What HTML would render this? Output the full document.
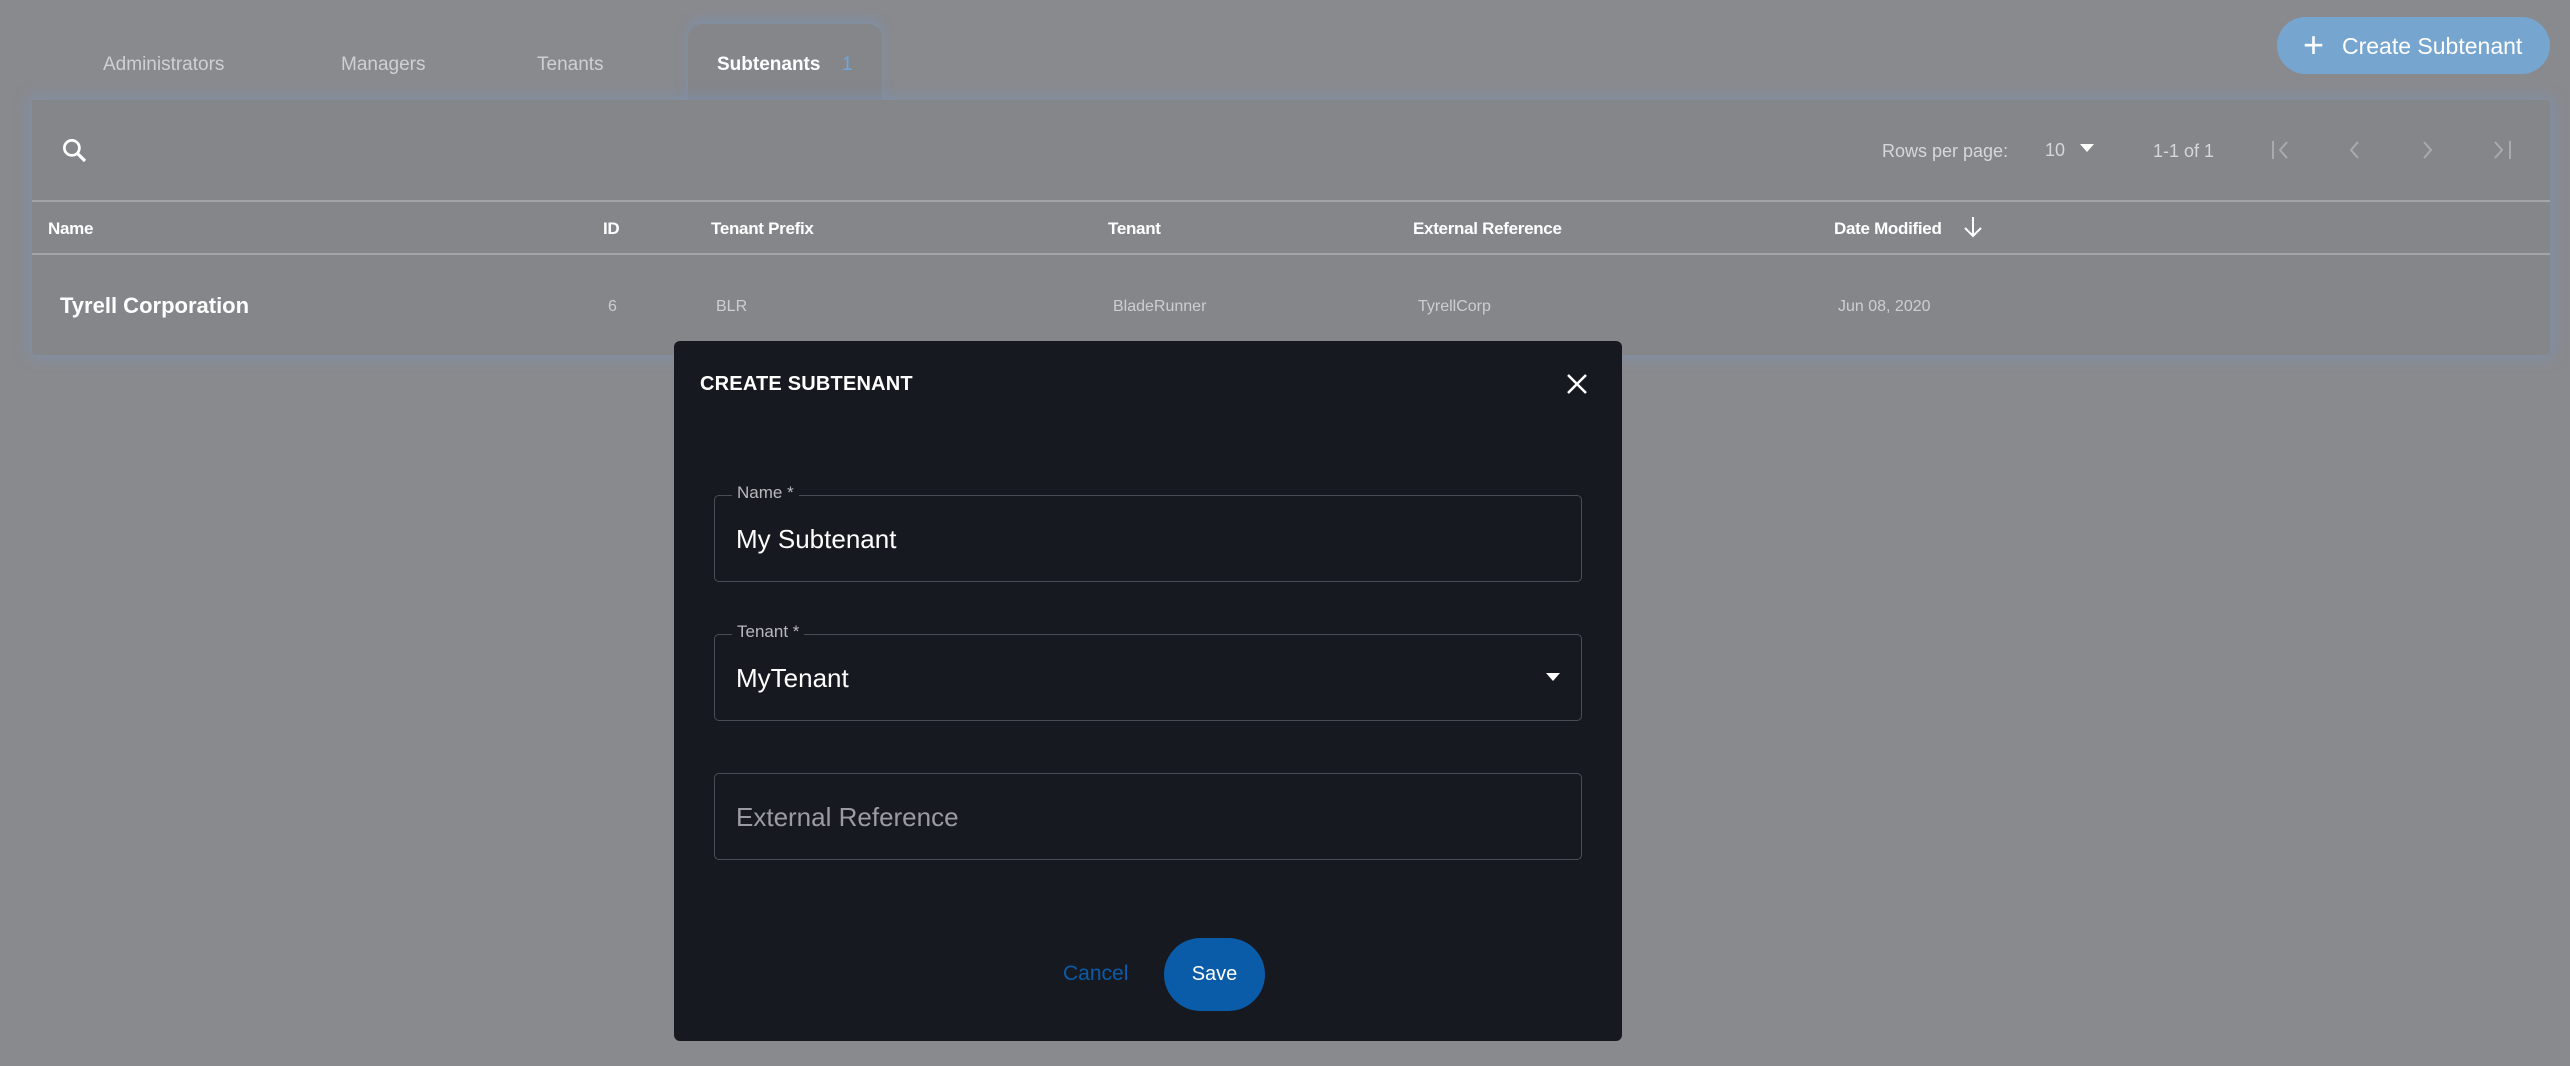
<!DOCTYPE html>
<html><head><meta charset="utf-8"><style>
*{box-sizing:border-box;margin:0;padding:0}
body{width:2570px;height:1066px;background:#898a8e;font-family:"Liberation Sans",sans-serif;position:relative;overflow:hidden;color:#fff}
.abs{position:absolute;white-space:nowrap}
.tab{top:54px;font-size:19px;color:#cfd0d3}
.card{position:absolute;left:32px;top:100px;width:2518px;height:255px;background:#85868a;border-radius:0 4px 4px 4px;box-shadow:0 0 14px 3px rgba(120,150,190,.55)}
.stab{position:absolute;left:688px;top:24px;width:194px;height:80px;background:#85868a;border-radius:14px 14px 0 0;box-shadow:0 -4px 10px 1px rgba(120,150,190,.5)}
.hline{position:absolute;left:32px;width:2518px;height:2px;background:#a3a4a8}
.th{top:219px;font-size:17px;font-weight:bold;color:#fff;letter-spacing:-.3px}
.td{top:298px;font-size:16px;color:#cdced1}
.modal{position:absolute;left:674px;top:341px;width:948px;height:700px;background:#161920;border-radius:6px}
.field{position:absolute;left:40px;width:868px;height:87px;border:1.5px solid #4a4d55;border-radius:5px}
.lbl{position:absolute;left:17px;top:-13px;background:#161920;padding:0 5px;font-size:17px;color:#b8b9bd}
.val{position:absolute;left:21px;top:28px;font-size:26px;color:#fff}
</style></head><body>
<div class="stab"></div>
<div class="card"></div>
<div class="abs tab" style="left:103px">Administrators</div>
<div class="abs tab" style="left:341px">Managers</div>
<div class="abs tab" style="left:537px">Tenants</div>
<div class="abs tab" style="left:717px;color:#fff;font-weight:bold">Subtenants</div>
<div class="abs tab" style="left:842px;color:#6fa6db">1</div>

<div class="abs" style="left:2277px;top:17px;width:273px;height:57px;border-radius:29px;background:#76a5cf"></div>
<div class="abs" style="left:2303px;top:24px;font-size:36px;color:#fff;font-weight:300">+</div>
<div class="abs" style="left:2342px;top:33px;font-size:23px;color:#fff">Create Subtenant</div>

<svg class="abs" style="left:60px;top:136px" width="30" height="30" viewBox="0 0 24 24"><circle cx="9.5" cy="9.5" r="6" fill="none" stroke="#fff" stroke-width="2.2"/><path d="M14 14l6 6" stroke="#fff" stroke-width="2.6"/></svg>

<div class="abs" style="left:1882px;top:141px;font-size:18px;color:#d6d7da">Rows per page:</div>
<div class="abs" style="left:2045px;top:140px;font-size:18px;color:#d6d7da">10</div>
<svg class="abs" style="left:2079px;top:142px" width="16" height="12"><path d="M1 2h14l-7 8z" fill="#fff"/></svg>
<div class="abs" style="left:2153px;top:141px;font-size:18px;color:#d6d7da">1-1 of 1</div>
<svg class="abs" style="left:2270px;top:138px" width="280" height="24" viewBox="0 0 280 24" fill="none" stroke="#a9aaae" stroke-width="2"><path d="M3 3v18M17 4l-7 8 7 8"/><path d="M88 4l-7 8 7 8"/><path d="M154 4l7 8-7 8"/><path d="M225 4l7 8-7 8M240 3v18"/></svg>

<div class="hline" style="top:200px"></div>
<div class="hline" style="top:253px"></div>
<div class="abs th" style="left:48px">Name</div>
<div class="abs th" style="left:603px">ID</div>
<div class="abs th" style="left:711px">Tenant Prefix</div>
<div class="abs th" style="left:1108px">Tenant</div>
<div class="abs th" style="left:1413px">External Reference</div>
<div class="abs th" style="left:1834px">Date Modified</div>
<svg class="abs" style="left:1962px;top:215px" width="22" height="24" fill="none" stroke="#fff" stroke-width="2"><path d="M11 2v19M3 13l8 8 8-8"/></svg>

<div class="abs" style="left:60px;top:293px;font-size:22px;font-weight:bold;color:#fff">Tyrell Corporation</div>
<div class="abs td" style="left:608px">6</div>
<div class="abs td" style="left:716px">BLR</div>
<div class="abs td" style="left:1113px">BladeRunner</div>
<div class="abs td" style="left:1418px">TyrellCorp</div>
<div class="abs td" style="left:1838px">Jun 08, 2020</div>

<div class="modal">
 <div class="abs" style="left:26px;top:32px;font-size:20px;font-weight:bold;color:#fff;letter-spacing:.2px">CREATE SUBTENANT</div>
 <svg class="abs" style="left:892px;top:32px" width="22" height="22" stroke="#fff" stroke-width="2.5"><path d="M2 2l18 18M20 2L2 20"/></svg>
 <div class="field" style="top:154px"><div class="lbl">Name *</div><div class="val">My Subtenant</div></div>
 <div class="field" style="top:293px"><div class="lbl">Tenant *</div><div class="val">MyTenant</div>
  <svg class="abs" style="left:830px;top:37px" width="16" height="10"><path d="M1 1h14l-7 8z" fill="#fff"/></svg></div>
 <div class="field" style="top:432px"><div class="val" style="color:#9a9ca1">External Reference</div></div>
 <div class="abs" style="left:389px;top:621px;font-size:21px;color:#0a5ca8">Cancel</div>
 <div class="abs" style="left:490px;top:597px;width:101px;height:73px;border-radius:37px;background:#0a5ca8;color:#fff;font-size:20px;text-align:center;line-height:73px">Save</div>
</div>
</body></html>
